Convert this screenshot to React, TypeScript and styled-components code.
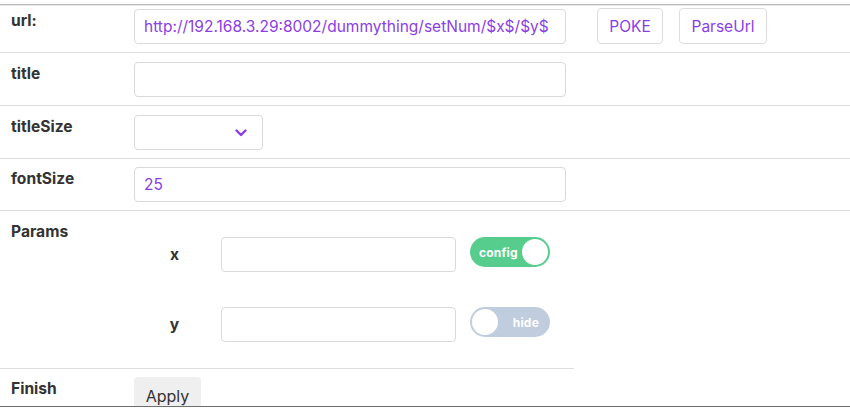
import React from "react";
import styled, { createGlobalStyle } from "styled-components";

const Global = createGlobalStyle`
  html, body { margin: 0; padding: 0; background: #fff; }
  body { font-family: Inter, "Noto Sans", sans-serif; color: #333; }
  * { box-sizing: border-box; }
`;

const Page = styled.div`
  padding-top: 4px;
  width: 850px;
`;

const Frame = styled.div`
  height: 403px;
  overflow: hidden;
  border-top: 1px solid #bdbdbd;
  border-bottom: 1px solid #6f6f6f;
  box-shadow: inset 0 1px 0 #e6e6e6, 0 1px 0 #b4b4b4;
`;

const Row = styled.div<{ $top?: number; $narrow?: boolean }>`
  display: flex;
  align-items: flex-start;
  padding: ${(p) => p.$top ?? 9}px 0 8px 0;
  border-bottom: 1px solid #dedede;
  width: ${(p) => (p.$narrow ? "574px" : "100%")};
`;

const Label = styled.div`
  width: 134px;
  padding-left: 11px;
  padding-top: 2px;
  font-size: 15.6px;
  line-height: 20px;
  font-weight: 700;
  color: #333;
`;

const TextInput = styled.input<{ $w?: number }>`
  width: ${(p) => p.$w ?? 432}px;
  height: 35px;
  border: 1px solid #d9d9d9;
  border-radius: 4px;
  padding: 0 9px;
  font-family: Inter, "Noto Sans", sans-serif;
  font-size: 15.5px;
  color: #8a3ee6;
  background: #fff;
  outline: none;
`;

const ButtonGroup = styled.div`
  display: flex;
  gap: 16px;
  margin-left: 31px;
  margin-top: -1px;
`;

const OutlineButton = styled.button<{ $w: number }>`
  width: ${(p) => p.$w}px;
  height: 36px;
  padding: 0;
  border: 1px solid #dcdcdc;
  border-radius: 4px;
  background: #fff;
  font-family: Inter, "Noto Sans", sans-serif;
  font-size: 15.5px;
  color: #8a3ee6;
`;

const SelectBox = styled.div`
  width: 129px;
  height: 35px;
  border: 1px solid #d9d9d9;
  border-radius: 4px;
  display: flex;
  align-items: center;
  justify-content: flex-end;
  padding-right: 15px;
`;

const Params = styled.div`
  display: flex;
  flex-direction: column;
`;

const ParamRow = styled.div`
  display: flex;
  align-items: flex-start;
  padding: 17px 0 18px;
`;

const ParamName = styled.div`
  width: 87px;
  padding-right: 6px;
  text-align: center;
  font-size: 15.6px;
  font-weight: 700;
  line-height: 35px;
  color: #333;
`;

const Toggle = styled.div<{ $on: boolean }>`
  width: 80px;
  height: 30px;
  border-radius: 15px;
  margin-left: 14px;
  background: ${(p) => (p.$on ? "#56cc8d" : "#c0cddf")};
  display: flex;
  align-items: center;
  flex-direction: ${(p) => (p.$on ? "row" : "row-reverse")};
  justify-content: space-between;
  padding-left: ${(p) => (p.$on ? "9px" : "2px")};
  padding-right: ${(p) => (p.$on ? "2px" : "11px")};
`;

const ToggleText = styled.span`
  color: #fff;
  font-size: 12px;
  font-weight: 700;
  letter-spacing: 0.2px;
`;

const Knob = styled.span`
  width: 26px;
  height: 26px;
  border-radius: 50%;
  background: #fff;
`;

const ApplyButton = styled.button`
  width: 67px;
  height: 36px;
  border: none;
  border-radius: 4px;
  background: #efefef;
  font-family: Inter, "Noto Sans", sans-serif;
  font-size: 16px;
  color: #333;
  padding-top: 2px;
`;

const Chevron = () => (
  <svg width="12" height="8" viewBox="0 0 12 8">
    <path d="M1.5 1.5 L6 6 L10.5 1.5" fill="none" stroke="#8a3ee6" strokeWidth="2.4" strokeLinecap="round" strokeLinejoin="round" />
  </svg>
);

export default function App() {
  return (
    <Page>
      <Global />
      <Frame>
        <Row $top={4}>
          <Label>url:</Label>
          <TextInput defaultValue="http://192.168.3.29:8002/dummything/setNum/$x$/$y$" />
          <ButtonGroup>
            <OutlineButton $w={66}>POKE</OutlineButton>
            <OutlineButton $w={88}>ParseUrl</OutlineButton>
          </ButtonGroup>
        </Row>
        <Row>
          <Label>title</Label>
          <TextInput />
        </Row>
        <Row>
          <Label>titleSize</Label>
          <SelectBox>
            <Chevron />
          </SelectBox>
        </Row>
        <Row $top={8}>
          <Label>fontSize</Label>
          <TextInput defaultValue="25" />
        </Row>
        <Row $narrow>
          <Label>Params</Label>
          <Params>
            <ParamRow>
              <ParamName>x</ParamName>
              <TextInput $w={235} />
              <Toggle $on>
                <ToggleText>config</ToggleText>
                <Knob />
              </Toggle>
            </ParamRow>
            <ParamRow>
              <ParamName>y</ParamName>
              <TextInput $w={235} />
              <Toggle $on={false}>
                <ToggleText>hide</ToggleText>
                <Knob />
              </Toggle>
            </ParamRow>
          </Params>
        </Row>
        <Row $top={8}>
          <Label>Finish</Label>
          <ApplyButton>Apply</ApplyButton>
        </Row>
      </Frame>
    </Page>
  );
}
